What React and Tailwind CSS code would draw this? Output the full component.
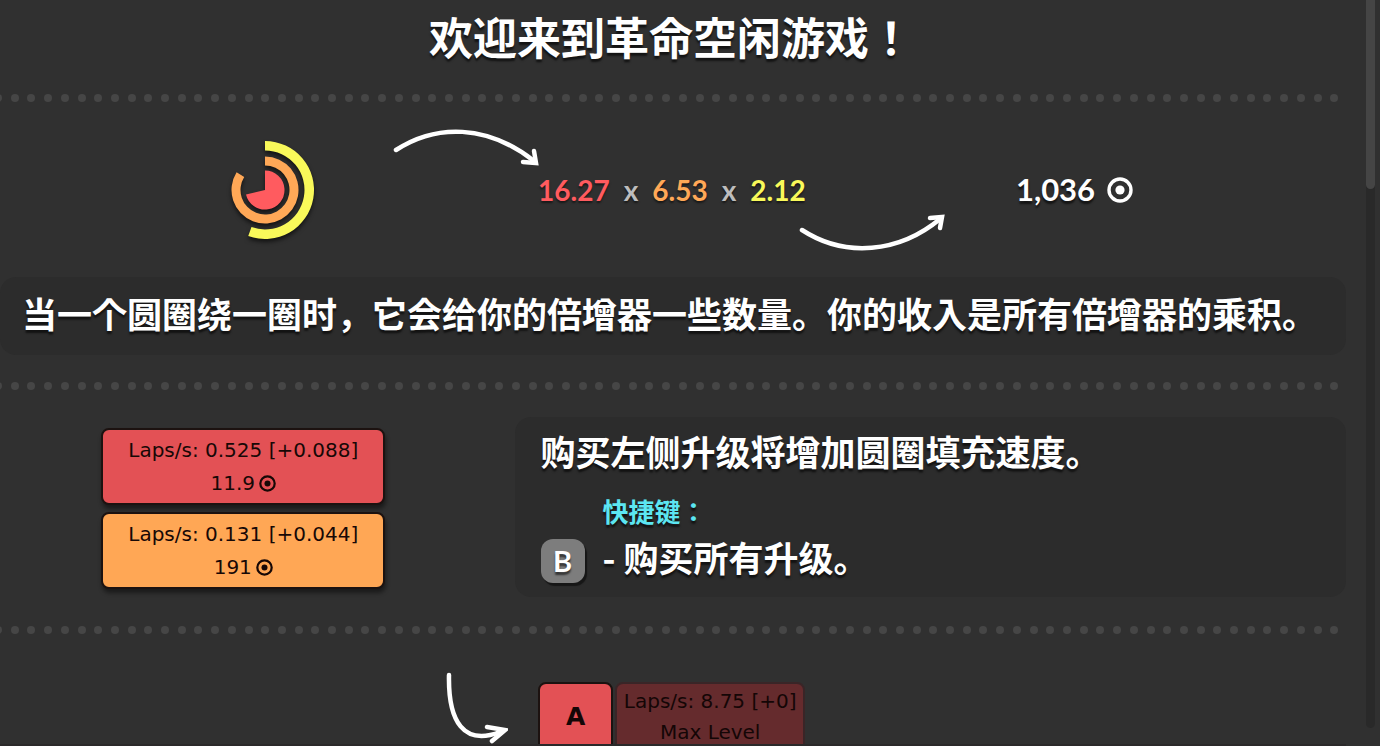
import React from "react";

const point = (r, deg) => {
  const a = ((deg - 90) * Math.PI) / 180;
  return `${(50 + r * Math.cos(a)).toFixed(2)} ${(50 + r * Math.sin(a)).toFixed(2)}`;
};

// ring sector running clockwise from the top
const sector = (outer, inner, deg) => {
  const large = deg > 180 ? 1 : 0;
  if (!inner) {
    return `M50 50 L${point(outer, 0)} A${outer} ${outer} 0 ${large} 1 ${point(outer, deg)}Z`;
  }
  return `M${point(outer, 0)} A${outer} ${outer} 0 ${large} 1 ${point(outer, deg)} L${point(inner, deg)} A${inner} ${inner} 0 ${large} 0 ${point(inner, 0)}Z`;
};

const Circles = () => (
  <svg
    viewBox="0 0 100 100"
    className="w-[100px] h-[100px] shrink-0 overflow-visible drop-shadow-[0_3px_2px_rgba(0,0,0,0.6)]"
  >
    <path d={sector(49, 39.5, 200)} fill="#f9f95a" />
    <path d={sector(33.5, 24.5, 302)} fill="#ffa857" />
    <path d={sector(19.5, 0, 257)} fill="#ff5b5f" />
  </svg>
);

const Coin = ({ className }) => (
  <svg viewBox="0 0 26 26" className={className} fill="currentColor">
    <circle cx="13" cy="13" r="11" fill="none" stroke="currentColor" strokeWidth="3.4" />
    <circle cx="13" cy="13" r="4.6" />
  </svg>
);

const Arrow = ({ d, head, viewBox, className }) => (
  <svg
    viewBox={viewBox}
    className={className}
    fill="none"
    stroke="#fff"
    strokeWidth="4.5"
    strokeLinecap="round"
    strokeLinejoin="miter"
  >
    <path d={d} />
    <path d={head} />
  </svg>
);

const Dots = () => (
  <div className="flex justify-between -ml-1.5 mr-[7px]" aria-hidden="true">
    {Array.from({ length: 81 }, (_, i) => (
      <span key={i} className="w-2 h-2 shrink-0 rounded-full bg-[#464646]" />
    ))}
  </div>
);

const UpgradeButton = ({ color, label, price }) => (
  <button
    type="button"
    className={`flex flex-col items-center w-[284px] h-[77px] pt-1 rounded-lg border-2 border-[#1c1210] text-[20px] leading-[33px] text-[#170806] whitespace-nowrap shadow-[1px_4px_4px_rgba(0,0,0,0.45)] font-['DejaVu_Sans',sans-serif] ${color}`}
  >
    <span>{label}</span>
    <span className="flex items-center gap-1">
      {price}
      <Coin className="w-[17px] h-[17px]" />
    </span>
  </button>
);

const App = () => {
  return (
    <div className="flex h-screen overflow-hidden bg-[#303030] text-white font-['Noto_Sans_CJK_JP',sans-serif]">
      <main className="flex-1 min-w-0 h-full overflow-hidden border-b-2 border-[#2b292a]">
        <h1 className="h-[94px] pt-1 pr-1 text-center text-[44px] leading-[64px] font-bold text-shadow-[0_3px_2px_rgba(0,0,0,0.6)]">
          欢迎来到革命空闲游戏！
        </h1>
        <Dots />

        {/* income */}
        <section className="flex justify-center items-center h-[175px] pl-[2px] font-['Lato',sans-serif] font-bold">
          <Circles />
          <Arrow
            viewBox="0 0 148 40"
            className="w-[148px] h-10 ml-[78px] mb-[84px] shrink-0"
            d="M3 22 C43 -4 94 -4 141 33"
            head="M130 34 L143 35 L141 23"
          />
          <p className="flex items-baseline gap-[14px] w-[262px] justify-center text-[28px] whitespace-nowrap text-shadow-[0_2px_2px_rgba(0,0,0,0.5)]">
            <span className="text-[#ff5b5f]">16.27</span>
            <span className="text-[#bdbdbd]">x</span>
            <span className="text-[#ffa857]">6.53</span>
            <span className="text-[#bdbdbd]">x</span>
            <span className="text-[#f9f95a]">2.12</span>
          </p>
          <Arrow
            viewBox="0 0 148 40"
            className="w-[148px] h-10 -ml-1 mt-[84px] shrink-0"
            d="M3 18 C46 46 100 41 141 7"
            head="M131 6 L143 5 L141 16"
          />
          <p className="flex items-center gap-3 ml-[69px] text-[31px] text-shadow-[0_3px_2px_rgba(0,0,0,0.6)]">
            1,036
            <Coin className="w-[26px] h-[26px]" />
          </p>
        </section>

        <p className="h-[78px] px-[22px] pt-[10px] rounded-2xl bg-[#2c2c2c] text-[35px] leading-[52px] font-bold whitespace-nowrap text-shadow-[0_3px_2px_rgba(0,0,0,0.6)]">
          当一个圆圈绕一圈时，它会给你的倍增器一些数量。你的收入是所有倍增器的乘积。
        </p>

        <div className="py-[27px]">
          <Dots />
        </div>

        {/* upgrades */}
        <section className="flex">
          <div className="flex flex-col items-center justify-center gap-[7px] w-[36%] mr-[30px] pt-[2px] pl-[2px]">
            <UpgradeButton color="bg-[#e35155]" label="Laps/s: 0.525 [+0.088]" price="11.9" />
            <UpgradeButton color="bg-[#ffa755]" label="Laps/s: 0.131 [+0.044]" price="191" />
          </div>
          <div className="flex-1 h-[180px] pl-[26px] pt-2 rounded-2xl bg-[#2c2c2c] text-[35px] leading-[52px] font-bold text-shadow-[0_3px_2px_rgba(0,0,0,0.6)]">
            <p>购买左侧升级将增加圆圈填充速度。</p>
            <p className="pt-[14px] pl-[62px] text-[26px] leading-[40px] text-[#5ce6f2]">快捷键：</p>
            <div className="flex items-end gap-[18px]">
              <kbd className="flex items-center justify-center w-11 h-11 rounded-xl bg-[#7d7d7d] text-[29px] font-bold font-['Lato',sans-serif] shadow-[2px_3px_1px_rgba(0,0,0,0.5)]">
                B
              </kbd>
              <p>- 购买所有升级。</p>
            </div>
          </div>
        </section>

        <div className="pt-[29px]">
          <Dots />
        </div>

        {/* automation */}
        <section className="flex items-start pl-[33%] pt-[38px] text-[20px] text-[#140606] font-['DejaVu_Sans',sans-serif]">
          <Arrow
            viewBox="0 0 64 74"
            className="w-16 h-[74px] shrink-0"
            d="M5 3 C4 50 20 74 56 60"
            head="M43 55 L61 58 L48 69"
          />
          <div className="flex gap-[2px] ml-[30px] mt-[10px] whitespace-nowrap">
            <button
              type="button"
              className="w-[75px] h-[78px] pb-2 rounded-lg border-2 border-[#1c1210] bg-[#e35155] text-[25px] font-bold"
            >
              A
            </button>
            <button
              type="button"
              disabled
              className="w-[190px] h-[78px] pb-2 rounded-lg border-2 border-[#3a2527] bg-[#652b2d] leading-[31px]"
            >
              Laps/s: 8.75 [+0]
              <br />
              Max Level
            </button>
          </div>
        </section>
      </main>

      {/* scrollbar */}
      <div className="w-[34px] flex justify-end pr-[5px] pb-[18px]">
        <div className="w-[9px] h-full rounded-b-full bg-[#292929]">
          <div className="w-full h-[26%] rounded-b-full bg-[#454545]" />
        </div>
      </div>
    </div>
  );
};

export default App;
